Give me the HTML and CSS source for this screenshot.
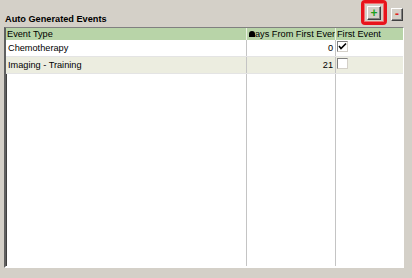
FILE: index.html
```html
<!DOCTYPE html>
<html>
<head>
<meta charset="utf-8">
<link rel="stylesheet" href="styles.css">
</head>
<body>
<div class="panel">
  <div class="bar">
    <div class="title">Auto Generated Events</div>
    <div class="tools">
      <div class="hl">
        <div class="btn plus"><span>+</span></div>
      </div>
      <div class="btn minus"><span>-</span></div>
    </div>
  </div>
  <div class="grid">
    <div class="row head">
      <div class="c c1">Event Type</div>
      <div class="c c2"><span class="sort"></span>ays From First Even</div>
      <div class="c c3">First Event</div>
    </div>
    <div class="row r1">
      <div class="c c1">Chemotherapy</div>
      <div class="c c2 num">0</div>
      <div class="c c3"><span class="cb checked"><svg viewBox="0 0 9 9" width="9" height="9"><path d="M1 4 L3 6.5 L8 1.5" fill="none" stroke="#000" stroke-width="1.6"/></svg></span></div>
    </div>
    <div class="row r2">
      <div class="c c1">Imaging - Training</div>
      <div class="c c2 num">21</div>
      <div class="c c3"><span class="cb"></span></div>
    </div>
    <div class="row fill">
      <div class="c c1"></div>
      <div class="c c2"></div>
      <div class="c c3"></div>
    </div>
  </div>
</div>
</body>
</html>
```

FILE: styles.css
```css
html, body {
  margin: 0;
  padding: 0;
  background: #d4d0c8;
  width: 412px;
  height: 278px;
  overflow: hidden;
  font-family: "Liberation Sans", Arial, sans-serif;
}
.panel {
  display: flex;
  flex-direction: column;
  padding-left: 4px;
}
.bar {
  height: 27px;
  display: flex;
  align-items: flex-end;
  justify-content: space-between;
  width: 399px;
}
.title {
  font-weight: bold;
  font-size: 9.2px;
  color: #000;
  padding-left: 1px;
  padding-bottom: 3px;
}
.tools {
  display: flex;
  align-items: flex-start;
  height: 27px;
}
.hl {
  width: 20px;
  height: 19px;
  border: 3px solid #e8141c;
  border-radius: 4px;
  box-shadow: inset 0 0 0 1px #f07070;
  display: flex;
  align-items: center;
  justify-content: center;
}
.btn {
  background: #d4d0c8;
  border-top: 1px solid #fff;
  border-left: 1px solid #fff;
  border-right: 1px solid #404040;
  border-bottom: 1px solid #404040;
  box-shadow: inset -1px -1px 0 #808080;
  display: flex;
  align-items: center;
  justify-content: center;
  font-weight: bold;
  font-size: 12px;
  line-height: 1;
}
.plus {
  width: 12px;
  height: 12px;
  color: #1ca01c;
}
.minus {
  width: 10px;
  height: 11px;
  margin-top: 8px;
  margin-left: 4px;
  color: #e02020;
}
.minus span {
  margin-top: -1px;
}
.grid {
  width: 397px;
  height: 238px;
  border-top: 1px solid #808080;
  border-left: 2px solid #606060;
  border-right: 1px solid #fff;
  border-bottom: 2px solid #fff;
  box-shadow: inset 1px 0 0 #404040;
  background: #fff;
  display: flex;
  flex-direction: column;
  font-size: 9.2px;
  color: #000;
}
.row {
  display: grid;
  grid-template-columns: 241px 89px 1fr;
}
.c {
  border-right: 1px solid #c4c4c4;
  padding: 0 2px;
  white-space: nowrap;
  overflow: hidden;
  display: flex;
  align-items: center;
}
.c3 {
  border-right: none;
  padding-left: 1px;
}
.head {
  height: 12px;
  background: #b8d4a8;
}
.head .c {
  border-right-color: #e8f0e0;
}
.head .c1 { padding-left: 1px; }
.r1 {
  height: 16px;
  background: #fff;
  border-bottom: 1px solid #e4e4e4;
}
.r2 {
  height: 16px;
  background: #ecede0;
  border-bottom: 1px solid #e4e4e4;
}
.fill {
  flex: 1;
}
.num {
  justify-content: flex-end;
  padding-right: 2px;
}
.sort {
  flex-shrink: 0;
  display: inline-block;
  width: 6px;
  height: 6px;
  background: #000;
  border-radius: 3px 3px 0 0;
  margin-right: 0;
}
.cb {
  flex-shrink: 0;
  width: 9px;
  height: 9px;
  background: #fff;
  border-top: 1px solid #808080;
  border-left: 1px solid #808080;
  border-right: 1px solid #d4d0c8;
  border-bottom: 1px solid #d4d0c8;
  align-self: flex-start;
  margin-top: 1px;
  display: flex;
}
```
